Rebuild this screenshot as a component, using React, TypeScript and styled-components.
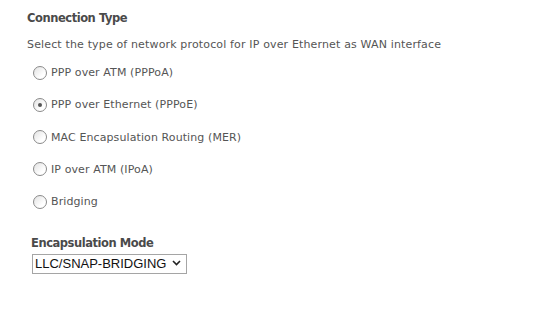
import React from "react";
import styled, { createGlobalStyle } from "styled-components";

const Global = createGlobalStyle`
  html, body { margin: 0; padding: 0; background: #fff; }
  body { font-family: "DejaVu Sans", Tahoma, sans-serif; color: #555; }
`;

const Page = styled.div`
  width: 555px;
  height: 328px;
  padding: 11px 0 0 27px;
  box-sizing: border-box;
  display: flex;
  flex-direction: column;
`;

const Heading = styled.div<{ $indent?: number }>`
  font-size: 11.5px;
  font-weight: bold;
  color: #4a4a4a;
  line-height: 14px;
  letter-spacing: -0.45px;
  padding-left: ${(p) => p.$indent ?? 0}px;
`;

const Desc = styled.div`
  margin-top: 13px;
  font-size: 11px;
  line-height: 14px;
  letter-spacing: 0.15px;
  color: #555;
`;

const Options = styled.div`
  display: flex;
  flex-direction: column;
  gap: 17.25px;
  margin-top: 13px;
  padding-left: 6px;
`;

const Option = styled.label`
  display: flex;
  align-items: center;
  gap: 4px;
  font-size: 11px;
  line-height: 15px;
  letter-spacing: 0.1px;
  color: #555;
`;

const Radio = styled.span<{ $checked?: boolean }>`
  width: 12px;
  height: 12px;
  border-radius: 50%;
  border: 1px solid #8a8a8a;
  background: linear-gradient(135deg, #e2e2e2 0%, #ffffff 70%);
  display: flex;
  align-items: center;
  justify-content: center;
  flex: none;
  &::after {
    content: "";
    width: 4px;
    height: 4px;
    border-radius: 50%;
    background: ${(p) => (p.$checked ? "#555" : "transparent")};
  }
`;

const EncSection = styled.div`
  margin-top: 27px;
  display: flex;
  flex-direction: column;
  gap: 3px;
`;

const SelectWrap = styled.div`
  position: relative;
  width: 155px;
  margin-left: 5px;
`;

const Select = styled.select`
  appearance: none;
  width: 155px;
  height: 20px;
  border: 1px solid #a5a5a5;
  border-radius: 0;
  background: #fff;
  font-family: "Liberation Sans", Arial, sans-serif;
  font-size: 13px;
  color: #111;
  padding: 0 0 0 2px;
  margin: 0;
  outline: none;
`;

const Chevron = styled.svg`
  position: absolute;
  right: 6px;
  top: 7px;
  pointer-events: none;
`;

const options = [
  "PPP over ATM (PPPoA)",
  "PPP over Ethernet (PPPoE)",
  "MAC Encapsulation Routing (MER)",
  "IP over ATM (IPoA)",
  "Bridging",
];

export default function App() {
  return (
    <>
      <Global />
      <Page>
        <Heading>Connection Type</Heading>
        <Desc>Select the type of network protocol for IP over Ethernet as WAN interface</Desc>
        <Options>
          {options.map((o, i) => (
            <Option key={o}>
              <Radio $checked={i === 1} />
              {o}
            </Option>
          ))}
        </Options>
        <EncSection>
          <Heading $indent={4}>Encapsulation Mode</Heading>
          <SelectWrap>
            <Select defaultValue="llc">
              <option value="llc">LLC/SNAP-BRIDGING</option>
              <option value="vc">VC/MUX</option>
            </Select>
            <Chevron width="9" height="6" viewBox="0 0 9 6">
              <path d="M1 1 L4.5 4.5 L8 1" stroke="#222" strokeWidth="1.6" fill="none" />
            </Chevron>
          </SelectWrap>
        </EncSection>
      </Page>
    </>
  );
}
